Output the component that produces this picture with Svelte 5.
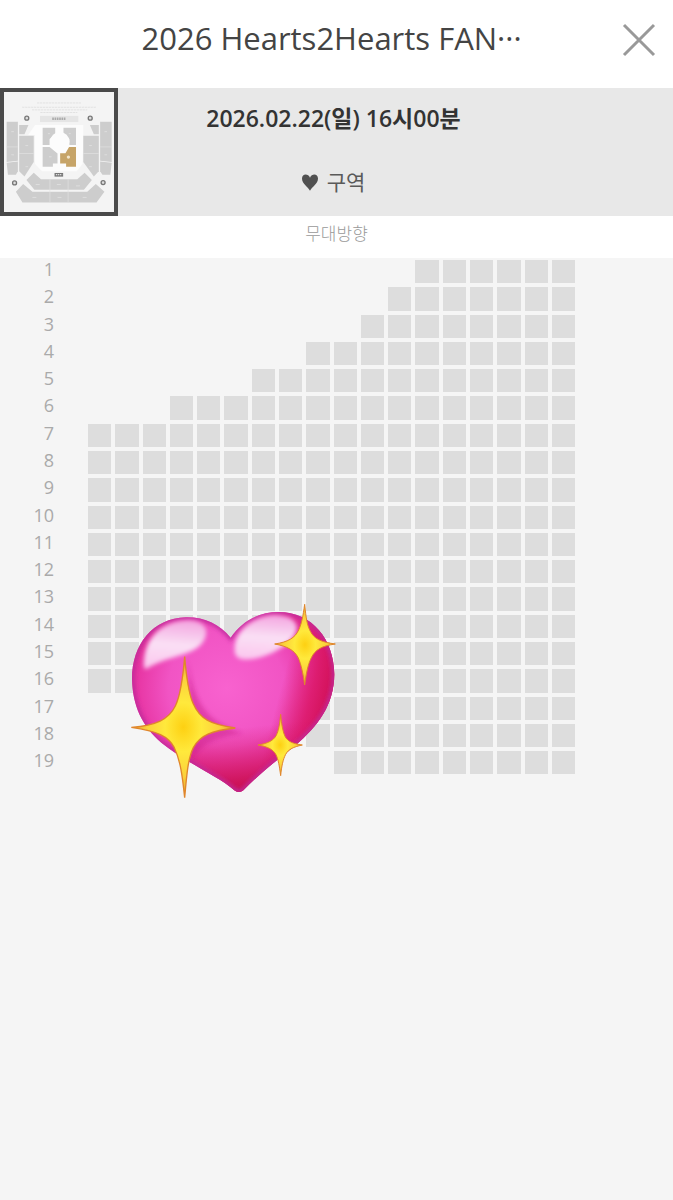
<script lang="ts">
  interface SeatRow {
    row: number;
    /** Index of the first seat column in this row. */
    from: number;
  }

  const COLS = 18;
  const starts = [12, 11, 10, 8, 6, 3, 0, 0, 0, 0, 0, 0, 0, 0, 0, 0, 6, 8, 9];
  const rows: SeatRow[] = starts.map((from, i) => ({ row: i + 1, from }));
  const cols = Array.from({ length: COLS }, (_, i) => i);

  let open = $state(true);
</script>

{#if open}
  <div class="page">
    <header class="top">
      <h1>2026 Hearts2Hearts FAN···</h1>
      <button class="close" type="button" aria-label="닫기" onclick={() => (open = false)}>
        <svg viewBox="0 0 34 34" aria-hidden="true">
          <path d="M2 2 32 32M32 2 2 32" fill="none" stroke="#999" stroke-width="3" />
        </svg>
      </button>
    </header>

    <section class="info">
      <button class="minimap" type="button" aria-label="좌석 배치도">
        <svg viewBox="10 22 333 363" aria-hidden="true">
          <rect x="10" y="22" width="333" height="363" fill="#f4f4f4" />
          <path d="M110 55H245M65 68H288M95 76H262M120 84H232" stroke="#e2e2e2" stroke-width="3" stroke-dasharray="7 2" />
          <path d="M83 152 104 122H250V152L248 240 230 262H125L104 240V152Z" fill="#fcfcfc" />
          <rect x="119" y="94" width="116" height="19" fill="#e5e5e5" />
          <path d="M156 103H198" stroke="#aaa" stroke-width="8" stroke-dasharray="5 2" />
          <g fill="#cdcdcd">
            <path d="M18 112H52V230L18 234Z" />
            <path d="M18 236 52 232V262L46 272H22Z" />
            <path d="M56 122H84L72 150H56Z" />
            <path d="M56 154H100V234L72 278 56 262Z" />
            <path d="M301 112H336V234L301 230Z" />
            <path d="M301 232 336 236 332 272H308L301 262Z" />
            <path d="M270 122H297V150H282Z" />
            <path d="M250 154H297V262L282 278 250 234Z" />
            <path d="M127 130H165V150L148 164V182H127Z" />
            <path d="M190 130H228V182H208V164L190 150Z" />
            <path d="M127 188H148L172 208V238H158V248H127Z" />
            <path d="M100 266 122 286H232L254 266 276 288 252 318H102L78 288Z" />
            <path d="M68 300 96 324H262L288 300 314 324 290 356H66L46 324Z" />
          </g>
          <path d="M149 286V356M204 286V356M18 188H52M301 188H336M56 208H100M250 208H297" stroke="#e2e2e2" stroke-width="2" />
          <circle cx="179" cy="172" r="29" fill="#fcfcfc" />
          <path d="M207 188H228V248H198V238H180V207H196Z" fill="#c6a468" />
          <circle cx="205" cy="219" r="5" fill="#f2e6cc" />
          <rect x="163" y="267" width="26" height="11" fill="#777" />
          <path d="M167 272H186" stroke="#ddd" stroke-width="4" stroke-dasharray="4 2" />
          <g fill="#ddd" stroke="#777" stroke-width="4">
            <circle cx="79" cy="101" r="6" />
            <circle cx="271" cy="101" r="6" />
            <circle cx="42" cy="297" r="6" />
            <circle cx="310" cy="296" r="6" />
          </g>
          <path d="M75 184h8M75 248h8M268 184h8M268 248h8M32 142h8M32 212h8M314 142h8M314 212h8M106 302h12M170 302h12M228 306h12M96 341h12M172 341h12M248 341h12M143 148h6M206 148h6M146 218h8" stroke="#dedede" stroke-width="3" />
        </svg>
      </button>
      <div class="when">
        <strong>2026.02.22(일) 16시00분</strong>
        <p>
          <svg class="suit" viewBox="0 0 48 50" aria-hidden="true">
            <path d="M24 50C19 39 0 29 0 13 0-2 19-3 24 11 29-3 48-2 48 13 48 29 29 39 24 50Z" fill="#505050" />
          </svg>
          구역
        </p>
      </div>
    </section>

    <p class="direction">무대방향</p>

    <main class="map">
      {#each rows as r (r.row)}
        <div class="row">
          <span class="num">{r.row}</span>
          <div class="seats">
            {#each cols as c (c)}
              {#if c >= r.from}
                <button class="seat" type="button" disabled aria-label="{r.row}열 {c + 1}번"></button>
              {:else}
                <i class="gap"></i>
              {/if}
            {/each}
          </div>
        </div>
      {/each}

      <svg class="sticker" viewBox="0 0 690 630" role="img" aria-label="sparkling heart">
        <defs>
          <radialGradient id="body" gradientUnits="userSpaceOnUse" cx="320" cy="280" r="350">
            <stop offset="0" stop-color="#f862cf" />
            <stop offset="0.5" stop-color="#f154c4" />
            <stop offset="0.75" stop-color="#e838a6" />
            <stop offset="1" stop-color="#d31a6c" />
          </radialGradient>
          <linearGradient id="side" gradientUnits="userSpaceOnUse" x1="490" y1="250" x2="640" y2="290">
            <stop offset="0" stop-color="#dc1462" stop-opacity="0" />
            <stop offset="0.6" stop-color="#da1460" stop-opacity="0.75" />
            <stop offset="1" stop-color="#d00e50" stop-opacity="0.9" />
          </linearGradient>
          <linearGradient id="base" gradientUnits="userSpaceOnUse" x1="340" y1="400" x2="360" y2="590">
            <stop offset="0" stop-color="#d81468" stop-opacity="0" />
            <stop offset="1" stop-color="#c80f4c" />
          </linearGradient>
          <linearGradient id="shine" x1="0.5" y1="0" x2="0.4" y2="1">
            <stop offset="0" stop-color="#f3a6e0" />
            <stop offset="0.5" stop-color="#fae0f5" />
            <stop offset="1" stop-color="#fbc6ee" />
          </linearGradient>
          <radialGradient id="gold">
            <stop offset="0" stop-color="#fdd012" />
            <stop offset="0.35" stop-color="#ffe93c" />
            <stop offset="0.7" stop-color="#fbd03c" />
            <stop offset="1" stop-color="#dfa02c" />
          </radialGradient>
          <filter id="soft" x="-20%" y="-20%" width="140%" height="140%">
            <feGaussianBlur stdDeviation="7" />
          </filter>
          <path id="heart" d="M332 128C300 88 253 66 198 67 98 70 36 148 36 252 38 332 66 394 124 443 205 508 290 540 345 587Q358 596 370 586C415 540 462 502 525 452 595 393 642 330 643 238 642 134 577 51 476 51 414 51 364 80 332 128Z" />
          <clipPath id="inside"><use href="#heart" /></clipPath>
        </defs>
        <use href="#heart" fill="url(#body)" />
        <use href="#heart" fill="url(#side)" />
        <use href="#heart" fill="url(#base)" />
        <g clip-path="url(#inside)">
          <use href="#heart" fill="none" stroke="#c02c9c" stroke-width="14" filter="url(#soft)" />
          <path d="M72 218C68 135 120 80 200 76 250 76 268 100 254 132 228 184 150 178 78 222Z" fill="url(#shine)" filter="url(#soft)" />
          <path d="M344 166C340 116 396 62 466 60 520 62 544 88 522 122 490 168 410 200 362 192 350 188 344 180 344 166Z" fill="url(#shine)" filter="url(#soft)" />
          <path d="M205 195C216 300 250 384 368 414 290 426 240 446 215 500Z" fill="#c81a86" opacity="0.45" filter="url(#soft)" />
        </g>
        <g fill="url(#gold)" stroke="#e0862c">
          <path d="M194 185C199 245 204 290 219 325 239 372 270 388 346 399 275 407 240 420 220 458 204 490 200 540 194 608 187 540 181 497 163 458 146 424 112 408 34 397 108 391 146 374 166 333 183 298 189 245 194 185Z" stroke-width="4" />
          <path d="M554 28C558 68 561 90 571 109 583 132 602 141 646 147 604 153 586 164 574 188 563 210 559 235 554 270 549 235 544 210 535 189 523 165 502 154 464 147 504 141 525 129 536 105 545 86 549 64 554 28Z" stroke-width="3" />
          <path d="M482 358C485 390 489 412 496 426 505 440 518 446 547 450 519 456 506 463 497 478 489 494 485 512 482 542 478 512 475 494 468 479 459 463 445 456 414 450 444 445 460 437 469 421 476 406 479 388 482 358Z" stroke-width="3" />
        </g>
      </svg>
    </main>
  </div>
{/if}

<style>
  :global(body) {
    margin: 0;
    background: #f5f5f5;
  }
  .page {
    min-height: 100vh;
    background: #f5f5f5;
    font-family: 'Open Sans', 'Noto Sans CJK KR', sans-serif;
    color: #444;
  }
  h1,
  p {
    margin: 0;
    font-weight: 400;
  }
  button {
    padding: 0;
    border: 0;
    background: none;
    font: inherit;
  }
  .top {
    display: grid;
    grid-template-columns: 54px 1fr 64px;
    align-items: center;
    height: 88px;
    background: #fff;
  }
  h1 {
    grid-column: 2;
    padding-bottom: 12px;
    font-size: 31px;
    line-height: 40px;
    text-align: center;
    white-space: nowrap;
  }
  .close {
    width: 34px;
    height: 34px;
    margin-left: 13px;
    margin-bottom: 8px;
    cursor: pointer;
  }
  .close svg,
  .minimap svg {
    display: block;
    width: 100%;
    height: 100%;
  }
  .info {
    display: flex;
    height: 128px;
    background: #e8e8e8;
  }
  .minimap {
    flex: none;
    box-sizing: border-box;
    width: 118px;
    border: 4px solid #4a4a4a;
    background: #f4f4f4;
    cursor: pointer;
  }
  .when {
    flex: 1;
    display: flex;
    flex-direction: column;
    align-items: center;
    gap: 32px;
    padding: 14px 124px 0 0;
  }
  .when strong {
    color: #333;
    font-size: 23px;
    font-weight: 600;
    line-height: 32px;
    white-space: nowrap;
  }
  .when p {
    display: flex;
    align-items: center;
    gap: 9px;
    color: #5a5a5a;
    font-size: 21px;
    line-height: 32px;
  }
  .suit {
    width: 16px;
    height: 17px;
  }
  .direction {
    height: 42px;
    background: #fff;
    color: #999;
    font-size: 17px;
    font-weight: 300;
    line-height: 36px;
    text-align: center;
  }
  .map {
    position: relative;
    display: flex;
    flex-direction: column;
    gap: 4px;
    padding: 2px 98px 0 0;
  }
  .row {
    display: grid;
    grid-template-columns: 54px 1fr;
    gap: 34px;
  }
  .num {
    height: 0;
    color: #aaa;
    font-size: 18px;
    line-height: 18px;
    text-align: right;
  }
  .seats {
    display: grid;
    grid-template-columns: repeat(18, 1fr);
    gap: 4px;
  }
  .seat,
  .gap {
    aspect-ratio: 1;
  }
  .seat {
    background: #ddd;
  }
  .sticker {
    position: absolute;
    top: 337px;
    left: 120px;
    width: 230px;
    height: 210px;
  }
</style>
